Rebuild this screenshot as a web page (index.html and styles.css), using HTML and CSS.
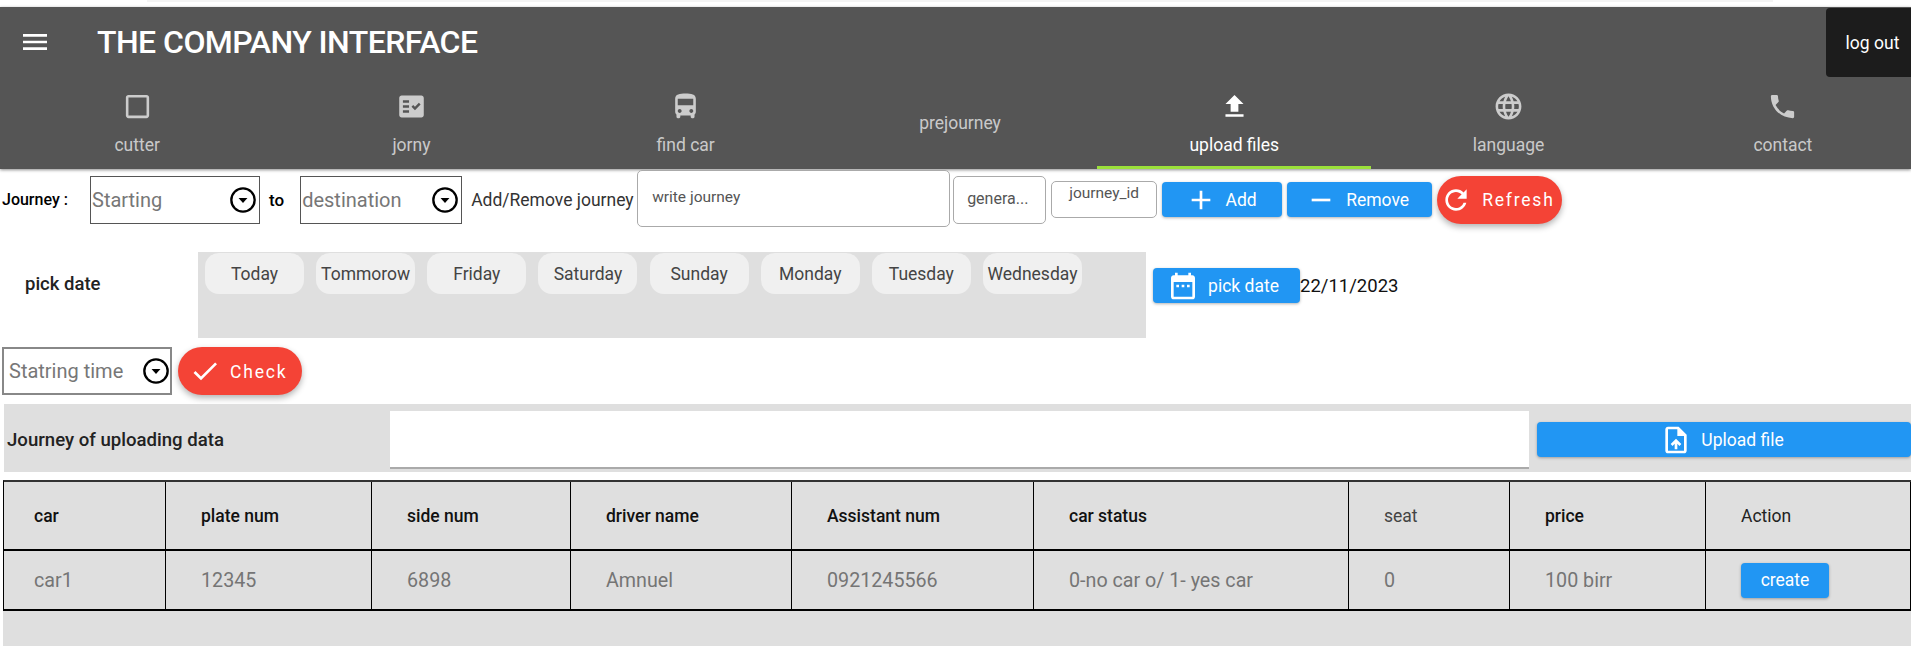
FILE: index.html
```html
<!DOCTYPE html>
<html lang="en">
<head>
    <meta charset="UTF-8">
    <title>The Company Interface</title>
    <link rel="stylesheet" href="styles.css">
</head>
<body>
    <div class="top-strip"></div>
    <header class="app-bar">
        <div class="title-row">
            <svg class="menu-icon" viewBox="0 0 24 24"><path d="M3 18h18v-2H3v2zm0-5h18v-2H3v2zm0-7v2h18V6H3z"/></svg>
            <h1 class="title">THE COMPANY INTERFACE</h1>
            <button class="logout">log out</button>
        </div>
        <nav class="tabs">
            <a class="tab">
                <svg class="tab-icon" viewBox="0 0 24 24"><path d="M19 5v14H5V5h14m0-2H5c-1.1 0-2 .9-2 2v14c0 1.1.9 2 2 2h14c1.1 0 2-.9 2-2V5c0-1.1-.9-2-2-2z"/></svg>
                <span>cutter</span>
            </a>
            <a class="tab">
                <svg class="tab-icon tab-icon-check" viewBox="1 1 22 22"><path fill-rule="evenodd" d="M20 3H4c-1.1 0-2 .9-2 2v14c0 1.1.9 2 2 2h16c1.1 0 2-.9 2-2V5c0-1.1-.9-2-2-2zM10 17H5v-2h5v2zm0-4H5v-2h5v2zm0-4H5V7h5v2zm4.82 6L12 12.16l1.41-1.41 1.41 1.42L17.99 9l1.42 1.42L14.82 15z"/></svg>
                <span>jorny</span>
            </a>
            <a class="tab">
                <svg class="tab-icon" viewBox="0 0 24 24"><path d="M4 16c0 .88.39 1.67 1 2.22V20c0 .55.45 1 1 1h1c.55 0 1-.45 1-1v-1h8v1c0 .55.45 1 1 1h1c.55 0 1-.45 1-1v-1.78c.61-.55 1-1.34 1-2.22V6c0-3.5-3.58-4-8-4s-8 .5-8 4v10zm3.5 1c-.83 0-1.5-.67-1.5-1.5S6.67 14 7.5 14s1.5.67 1.5 1.5S8.33 17 7.5 17zm9 0c-.83 0-1.5-.67-1.5-1.5s.67-1.5 1.5-1.5 1.5.67 1.5 1.5-.67 1.5-1.5 1.5zm1.5-6H6V6h12v5z"/></svg>
                <span>find car</span>
            </a>
            <a class="tab"><span>prejourney</span></a>
            <a class="tab active">
                <svg class="tab-icon" viewBox="0 0 24 24"><path d="M9 16h6v-6h4l-7-7-7 7h4zm-4 2h14v2H5z"/></svg>
                <span>upload files</span>
            </a>
            <a class="tab">
                <svg class="tab-icon" viewBox="0 0 24 24"><path d="M11.99 2C6.47 2 2 6.48 2 12s4.47 10 9.99 10C17.52 22 22 17.52 22 12S17.52 2 11.99 2zm6.93 6h-2.95c-.32-1.25-.78-2.45-1.38-3.56 1.84.63 3.37 1.91 4.33 3.56zM12 4.04c.83 1.2 1.48 2.53 1.91 3.96h-3.82c.43-1.43 1.08-2.76 1.91-3.96zM4.26 14C4.1 13.36 4 12.69 4 12s.1-1.36.26-2h3.38c-.08.66-.14 1.32-.14 2 0 .68.06 1.34.14 2H4.26zm.82 2h2.95c.32 1.25.78 2.45 1.38 3.56-1.84-.63-3.37-1.9-4.33-3.56zm2.95-8H5.08c.96-1.66 2.49-2.93 4.33-3.56C8.81 5.55 8.35 6.75 8.03 8zM12 19.96c-.83-1.2-1.48-2.53-1.91-3.96h3.82c-.43 1.43-1.08 2.76-1.91 3.96zM14.34 14H9.66c-.09-.66-.16-1.32-.16-2 0-.68.07-1.35.16-2h4.68c.09.65.16 1.32.16 2 0 .68-.07 1.34-.16 2zm.25 5.56c.6-1.11 1.06-2.31 1.38-3.56h2.95c-.96 1.65-2.49 2.93-4.33 3.56zM16.36 14c.08-.66.14-1.32.14-2 0-.68-.06-1.34-.14-2h3.38c.16.64.26 1.31.26 2s-.1 1.36-.26 2h-3.38z"/></svg>
                <span>language</span>
            </a>
            <a class="tab">
                <svg class="tab-icon" viewBox="0 0 24 24"><path d="M6.62 10.79c1.44 2.83 3.76 5.14 6.59 6.59l2.2-2.2c.27-.27.67-.36 1.02-.24 1.12.37 2.33.57 3.57.57.55 0 1 .45 1 1V20c0 .55-.45 1-1 1-9.39 0-17-7.61-17-17 0-.55.45-1 1-1h3.5c.55 0 1 .45 1 1 0 1.25.2 2.45.57 3.57.11.35.03.74-.25 1.02l-2.2 2.2z"/></svg>
                <span>contact</span>
            </a>
        </nav>
    </header>

    <section class="journey-row">
        <span class="journey-label">Journey :</span>
        <div class="select select-start">
            <span>Starting</span>
            <svg class="drop-icon" viewBox="0 0 24 24"><circle cx="12" cy="12" r="10" fill="none" stroke="#000" stroke-width="2"/><path d="M8.2 10.3h7.6L12 14.6z"/></svg>
        </div>
        <span class="to-label">to</span>
        <div class="select select-dest">
            <span>destination</span>
            <svg class="drop-icon" viewBox="0 0 24 24"><circle cx="12" cy="12" r="10" fill="none" stroke="#000" stroke-width="2"/><path d="M8.2 10.3h7.6L12 14.6z"/></svg>
        </div>
        <span class="add-remove-label">Add/Remove journey</span>
        <div class="field field-write">write journey</div>
        <div class="field field-gen">genera...</div>
        <div class="field field-id">journey_id</div>
        <button class="btn btn-add">
            <svg class="btn-icon" viewBox="0 0 24 24"><path d="M19 13h-6v6h-2v-6H5v-2h6V5h2v6h6v2z"/></svg>
            <span>Add</span>
        </button>
        <button class="btn btn-remove">
            <svg class="btn-icon" viewBox="0 0 24 24"><path d="M19 13H5v-2h14v2z"/></svg>
            <span>Remove</span>
        </button>
        <button class="pill btn-refresh">
            <svg class="pill-icon" viewBox="0 0 24 24"><path d="M17.65 6.35C16.2 4.9 14.21 4 12 4c-4.42 0-7.99 3.58-7.99 8s3.57 8 7.99 8c3.73 0 6.84-2.55 7.73-6h-2.08c-.82 2.33-3.04 4-5.65 4-3.31 0-6-2.69-6-6s2.69-6 6-6c1.66 0 3.14.69 4.22 1.78L13 11h7V4l-2.35 2.35z"/></svg>
            <span>Refresh</span>
        </button>
    </section>

    <section class="date-row">
        <span class="date-label">pick date</span>
        <div class="day-panel">
            <button class="chip">Today</button>
            <button class="chip">Tommorow</button>
            <button class="chip">Friday</button>
            <button class="chip">Saturday</button>
            <button class="chip">Sunday</button>
            <button class="chip">Monday</button>
            <button class="chip">Tuesday</button>
            <button class="chip">Wednesday</button>
        </div>
        <button class="btn btn-date">
            <svg class="btn-icon" viewBox="0 0 24 24"><path d="M9 11H7v2h2v-2zm4 0h-2v2h2v-2zm4 0h-2v2h2v-2zm2-7h-1V2h-2v2H8V2H6v2H5c-1.11 0-1.99.9-1.99 2L3 20c0 1.1.89 2 2 2h14c1.1 0 2-.9 2-2V6c0-1.1-.9-2-2-2zm0 16H5V9h14v11z"/></svg>
            <span>pick date</span>
        </button>
        <span class="date-value">22/11/2023</span>
    </section>

    <section class="time-row">
        <div class="select select-time">
            <span>Statring time</span>
            <svg class="drop-icon" viewBox="0 0 24 24"><circle cx="12" cy="12" r="10" fill="none" stroke="#000" stroke-width="2"/><path d="M8.2 10.3h7.6L12 14.6z"/></svg>
        </div>
        <button class="pill btn-check">
            <svg class="pill-icon" viewBox="0 0 24 24"><path d="M9 16.17L4.83 12l-1.42 1.41L9 19 21 7l-1.41-1.41z"/></svg>
            <span>Check</span>
        </button>
    </section>

    <section class="upload-row">
        <span class="upload-label">Journey of uploading data</span>
        <div class="upload-input"></div>
        <button class="btn btn-upload">
            <svg class="btn-icon" viewBox="0 0 24 24"><path d="M14 2H6c-1.1 0-1.99.9-1.99 2L4 20c0 1.1.89 2 2 2h12c1.1 0 2-.9 2-2V8l-6-6zm4 18H6V4h7v5h5v11zM8 15.01l1.41 1.41L11 14.84V19h2v-4.16l1.59 1.59L16 15.01 12.01 11 8 15.01z"/></svg>
            <span>Upload file</span>
        </button>
    </section>

    <section class="table-wrap">
        <div class="table-row table-head">
            <div class="cell">car</div>
            <div class="cell">plate num</div>
            <div class="cell">side num</div>
            <div class="cell">driver name</div>
            <div class="cell">Assistant num</div>
            <div class="cell">car status</div>
            <div class="cell cell-seat">seat</div>
            <div class="cell">price</div>
            <div class="cell cell-action">Action</div>
        </div>
        <div class="table-row table-body">
            <div class="cell">car1</div>
            <div class="cell">12345</div>
            <div class="cell">6898</div>
            <div class="cell">Amnuel</div>
            <div class="cell">0921245566</div>
            <div class="cell">0-no car o/ 1- yes car</div>
            <div class="cell">0</div>
            <div class="cell">100 birr</div>
            <div class="cell"><button class="btn btn-create">create</button></div>
        </div>
        <div class="table-fill"></div>
    </section>
</body>
</html>
```

FILE: styles.css
```css
* { box-sizing: border-box; }
html, body { height: 646px; }
body { margin: 0; overflow: hidden; background: #fff; color: #000; font-family: Roboto, "Liberation Sans", sans-serif; display: flex; flex-direction: column; }
button { font-family: inherit; border: none; cursor: pointer; }
h1 { margin: 0; }

.top-strip { flex: none; height: 2px; margin: 0 138px 5px 147px; background: #f4f4f4; }

/* app bar */
.app-bar { flex: none; height: 162px; background: #555; color: #fff; box-shadow: 0 1px 3px rgba(0, 0, 0, .45); }
.title-row { display: flex; align-items: flex-start; height: 70px; }
.menu-icon { width: 32px; height: 32px; margin: 19px 0 0 19px; fill: #fff; }
.title { margin: 17px 0 0 46px; font-size: 32px; line-height: 37px; font-weight: 500; letter-spacing: -.55px; }
.logout { margin: 1px 0 0 auto; width: 85px; height: 69px; padding: 0 0 0 8px; background: #1c1c1c; color: #fff; font-size: 17.5px; border-radius: 4px 0 0 4px; }
.tabs { display: grid; grid-template-columns: repeat(7, 1fr); width: 1920px; height: 92px; }
.tab { display: flex; flex-direction: column; align-items: center; justify-content: center; gap: 13px; color: rgba(255, 255, 255, .7); font-size: 17.5px; line-height: 20px; }
.tab.active { color: #fff; box-shadow: inset 0 -3px 0 #9be03a; }
.tab-icon { width: 31px; height: 31px; fill: currentColor; }
.tab-icon-check { padding: 2px; }

/* journey row */
.journey-row { flex: none; display: flex; align-items: center; height: 61px; }
.journey-label { margin-left: 2px; width: 88px; font-size: 16px; font-weight: 500; }
.select { display: flex; align-items: center; justify-content: space-between; height: 48px; padding: 0 2px 0 1px; border: 1px solid #555; color: #777; font-size: 20px; }
.select-start { width: 170px; }
.select-dest { width: 162px; }
.drop-icon { width: 28px; height: 28px; flex: none; }
.to-label { margin: 0 16px 0 9px; font-size: 17px; font-weight: 500; }
.add-remove-label { margin-left: 9px; width: 166px; font-size: 17.5px; color: #333; white-space: nowrap; }
.field { background: #fff; border: 1px solid #aaa; border-radius: 5px; color: #555; font-size: 15.5px; }
.field-write { width: 313px; height: 57px; margin-top: -2px; padding: 17px 14px 0; }
.field-gen { width: 93px; height: 48px; margin-left: 3px; padding: 12px 0 0 13px; font-size: 16px; }
.field-id { width: 106px; height: 37px; margin-left: 5px; padding: 2px 0 0; text-align: center; }

.btn { display: inline-flex; align-items: center; justify-content: center; height: 35px; padding: 0; background: #2196f3; color: #fff; font-size: 17.5px; border-radius: 4px; box-shadow: 0 1px 3px rgba(0, 0, 0, .3); }
.btn-icon { width: 32px; height: 32px; fill: #fff; flex: none; }
.btn-add { width: 120px; margin-left: 5px; gap: 9px; padding-right: 3px; }
.btn-remove { width: 145px; margin-left: 5px; gap: 9px; padding-right: 5px; }
.pill { display: inline-flex; align-items: center; height: 48px; background: #f44336; color: #fff; font-size: 17.5px; letter-spacing: 1.8px; font-weight: 400; border-radius: 24px; box-shadow: 0 3px 6px rgba(0, 0, 0, .3); }
.pill-icon { width: 32px; height: 32px; fill: #fff; flex: none; }
.btn-refresh { width: 125px; margin-left: 5px; padding: 0 0 0 3px; gap: 10px; }

/* date row */
.date-row { flex: none; display: flex; align-items: flex-start; margin-top: 22px; height: 86px; }
.date-label { width: 198px; padding: 21px 0 0 25px; font-size: 18.5px; font-weight: 500; color: #222; }
.day-panel { display: flex; gap: 12.15px; width: 948px; height: 86px; padding: 1px 0 0 7px; background: #dfdfdf; }
.chip { width: 99px; height: 41px; padding: 0; background: #f0f0f0; color: #444; font-size: 17.5px; border-radius: 14px; }
.btn-date { width: 147px; margin: 16px 0 0 7px; gap: 9px; padding-right: 7px; }
.date-value { margin-top: 23px; font-size: 18.5px; color: #111; }

/* time row */
.time-row { flex: none; display: flex; margin: 9px 0 0 2px; gap: 6px; }
.select-time { width: 170px; padding: 0 0 0 5px; border: 2px solid #888; }
.btn-check { width: 124px; padding: 2px 0 0 11px; gap: 9px; }
.btn-check .pill-icon { margin-top: -2px; }

/* upload row */
.upload-row { flex: none; display: flex; align-items: flex-start; height: 68px; margin: 9px 0 0 4px; background: #dfdfdf; }
.upload-label { width: 386px; padding: 25px 0 0 3px; font-size: 18.6px; font-weight: 500; color: #222; }
.upload-input { width: 1140px; height: 58px; margin-top: 7px; background: #fff; border-bottom: 2px solid #aaa; }
.btn-upload { width: 374px; margin: 18px 0 0 8px; gap: 9px; padding-right: 4px; flex: none; }

/* table */
.table-wrap { flex: 1; margin: 8px 0 0 3px; display: flex; flex-direction: column; background: #dfdfdf; }
.table-row { display: grid; grid-template-columns: 162px 206px 199px 221px 242px 315px 161px 196px 1fr; border-left: 1px solid #000; }
.cell { display: flex; align-items: center; padding-left: 35px; border-right: 1px solid #000; font-size: 18px; }
.cell:first-child { padding-left: 30px; }
.table-head { height: 71px; border-top: 2px solid #333; border-bottom: 2px solid #000; }
.table-head .cell { font-size: 17.5px; font-weight: 500; color: #111; }
.table-head .cell-seat { font-weight: 400; color: #444; }
.table-head .cell-action { font-weight: 400; color: #222; }
.table-body { height: 60px; border-bottom: 2px solid #000; }
.table-body .cell { color: #757575; font-size: 19.7px; }
.btn-create { width: 88px; font-size: 17.5px; }
.table-fill { flex: 1; }
```
